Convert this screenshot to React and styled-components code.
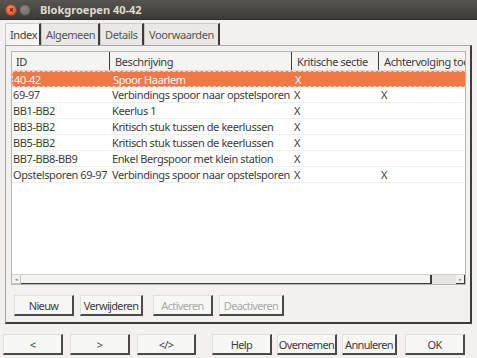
import React from 'react';
import styled, { createGlobalStyle } from 'styled-components';

const GlobalStyle = createGlobalStyle`
  html, body {
    margin: 0;
    padding: 0;
    background: #f2f1f0;
  }
  body {
    font-family: "Noto Sans", "Open Sans", sans-serif;
    font-size: 11px;
    letter-spacing: -0.4px;
    color: #3c3c3c;
  }
`

const Window = styled.div`
  width: 477px;
  height: 358px;
  background: #f2f1f0;
  display: flex;
  flex-direction: column;
  overflow: hidden;
`

const TitleBar = styled.div`
  height: 20px;
  flex: none;
  display: flex;
  align-items: center;
  padding-left: 5px;
  gap: 2px;
  background: linear-gradient(#57554f, #3c3b37);
  border-bottom: 1px solid #2f2e2b;
  box-sizing: border-box;
`

const WinButton = styled.div`
  width: 10px;
  height: 10px;
  border-radius: 50%;
  background: ${p => p.$close ? 'radial-gradient(circle at 40% 35%, #f58a63, #dd4814)' : 'radial-gradient(circle at 40% 35%, #8a8883, #6a6864)'};
  border: 1px solid ${p => p.$close ? '#9e3a12' : '#4b4945'};
  display: flex;
  align-items: center;
  justify-content: center;
  color: #3a1b10;
  font-size: 8px;
  line-height: 1;
  font-weight: bold;
`

const Title = styled.span`
  margin-left: 7px;
  color: #dfdbd2;
  font-weight: bold;
  font-size: 11px;
  letter-spacing: 0;
`

const Content = styled.div`
  flex: 1;
  display: flex;
  flex-direction: column;
  padding: 3px 5px 0 5px;
`

const TabBar = styled.div`
  display: flex;
  height: 22px;
  align-items: stretch;
`

const Tab = styled.div`
  width: ${p => p.$w}px;
  box-sizing: border-box;
  padding-left: 4px;
  display: flex;
  align-items: center;
  color: ${p => p.$active ? '#3c3c3c' : '#555'};
  background: ${p => p.$active ? '#f6f5f4' : '#e9e8e6'};
  border-left: 1px solid #c8c6c2;
  border-top: 1px solid #d0cec9;
  border-right: 2px solid #3a3a3a;
`

const Panel = styled.div`
  height: 279px;
  border: 1px solid #a9a7a3;
  border-right: 2px solid #3c3c3c;
  border-bottom: 2px solid #3c3c3c;
  box-sizing: border-box;
  padding: 5px 4px 0 5px;
  display: flex;
  flex-direction: column;
`

const TableBox = styled.div`
  height: 234px;
  border: 1px solid #b8b6b2;
  background: #fff;
  display: flex;
  flex-direction: column;
  box-sizing: border-box;
`

const Viewport = styled.div`
  flex: 1;
  overflow: hidden;
  background: #fff;
`

const Grid = styled.div`
  width: 500px;
`

const HeaderRow = styled.div`
  display: grid;
  grid-template-columns: 98px 182px 87px 133px;
  height: 18px;
  background: #f4f4f3;
  border-bottom: 1px solid #dcdad6;
`

const HeaderCell = styled.div`
  display: flex;
  align-items: center;
  padding-left: ${p => p.$first ? '4px' : '5px'};
  color: #3c3c3c;
  border-right: 1px solid #3c3c3c;
  white-space: nowrap;
  overflow: hidden;
`

const Row = styled.div`
  display: grid;
  grid-template-columns: 98px 182px 87px 133px;
  height: 16px;
  box-sizing: border-box;
  background: ${p => p.$selected ? '#f07746' : '#fff'};
  color: ${p => p.$selected ? '#fff' : '#3c3c3c'};
  border: ${p => p.$selected ? '1px dashed #fbd3c2' : 'none'};
  border-bottom: ${p => p.$selected ? '1px dashed #fbd3c2' : '1px solid #eeeeec'};
`

const Cell = styled.div`
  display: flex;
  align-items: center;
  padding-left: ${p => p.$first ? '1px' : '2px'};
  white-space: nowrap;
  overflow: hidden;
`

const HScroll = styled.div`
  height: 9px;
  display: flex;
  background: #e6e5e3;
  border-top: 1px solid #d4d2ce;
`

const ArrowBtn = styled.div`
  width: 8px;
  display: flex;
  align-items: center;
  justify-content: center;
  background: #f2f1f0;
  border-right: 1px solid ${p => p.$dark ? '#3c3c3c' : '#c8c6c2'};
  border-bottom: 1px solid ${p => p.$dark ? '#3c3c3c' : '#c8c6c2'};
  color: #888;
  font-size: 5px;
`

const Thumb = styled.div`
  width: 409px;
  background: #f4f4f3;
  border-right: 2px solid #3c3c3c;
  border-bottom: 1px solid #3c3c3c;
`

const Trough = styled.div`
  flex: 1;
`

const ButtonRow = styled.div`
  display: flex;
  padding: ${p => p.$pad || '0'};
  margin-left: ${p => p.$ml || 0}px;
`

const Button = styled.div`
  width: ${p => p.$w || 60}px;
  margin-left: ${p => p.$ml || 0}px;
  height: 21px;
  flex: none;
  box-sizing: border-box;
  display: flex;
  align-items: center;
  justify-content: center;
  background: #f7f7f6;
  border-top: 1px solid #e2e0dc;
  border-left: 1px solid #e2e0dc;
  border-right: 2px solid #4a4a4a;
  border-bottom: 2px solid #4a4a4a;
  color: ${p => p.$disabled ? '#a9a9a9' : '#3c3c3c'};
  letter-spacing: -0.65px;
  white-space: nowrap;
`

const rows = [
  ['40-42', 'Spoor Haarlem', 'X', ''],
  ['69-97', 'Verbindings spoor naar opstelsporen', 'X', 'X'],
  ['BB1-BB2', 'Keerlus 1', 'X', ''],
  ['BB3-BB2', 'Kritisch stuk tussen de keerlussen', 'X', ''],
  ['BB5-BB2', 'Kritisch stuk tussen de keerlussen', 'X', ''],
  ['BB7-BB8-BB9', 'Enkel Bergspoor met klein station', 'X', ''],
  ['Opstelsporen 69-97', 'Verbindings spoor naar opstelsporen', 'X', 'X'],
];

export default function App() {
  return (
    <Window>
      <GlobalStyle />
      <TitleBar>
        <WinButton $close>×</WinButton>
        <WinButton />
        <Title>Blokgroepen 40-42</Title>
      </TitleBar>
      <Content>
        <TabBar>
          <Tab $active $w={36}>Index</Tab>
          <Tab $w={59}>Algemeen</Tab>
          <Tab $w={44}>Details</Tab>
          <Tab $w={76}>Voorwaarden</Tab>
        </TabBar>
        <Panel>
          <TableBox>
            <Viewport>
              <Grid>
                <HeaderRow>
                  <HeaderCell $first>ID</HeaderCell>
                  <HeaderCell>Beschrijving</HeaderCell>
                  <HeaderCell>Kritische sectie</HeaderCell>
                  <HeaderCell>Achtervolging toegestaan</HeaderCell>
                </HeaderRow>
                {rows.map((r, i) => (
                  <Row key={i} $selected={i === 0}>
                    {r.map((c, j) => <Cell key={j} $first={j === 0}>{c}</Cell>)}
                  </Row>
                ))}
              </Grid>
            </Viewport>
            <HScroll>
              <ArrowBtn>◂</ArrowBtn>
              <Thumb />
              <Trough />
              <ArrowBtn $dark>▸</ArrowBtn>
            </HScroll>
          </TableBox>
          <ButtonRow $pad="10px 0 0 3px">
            <Button $w={60}>Nieuw</Button>
            <Button $w={63} $ml={6}>Verwijderen</Button>
            <Button $w={60} $ml={10} $disabled>Activeren</Button>
            <Button $w={65} $ml={6} $disabled>Deactiveren</Button>
          </ButtonRow>
        </Panel>
        <ButtonRow $pad="10px 0 0 0" $ml={-2}>
          <Button $w={60}>&lt;</Button>
          <Button $w={60} $ml={7}>&gt;</Button>
          <Button $w={59} $ml={7}>&lt;/&gt;</Button>
          <Button $w={60} $ml={16}>Help</Button>
          <Button $w={60} $ml={5}>Overnemen</Button>
          <Button $w={55} $ml={5}>Annuleren</Button>
          <Button $w={60} $ml={8}>OK</Button>
        </ButtonRow>
      </Content>
    </Window>
  );
}
